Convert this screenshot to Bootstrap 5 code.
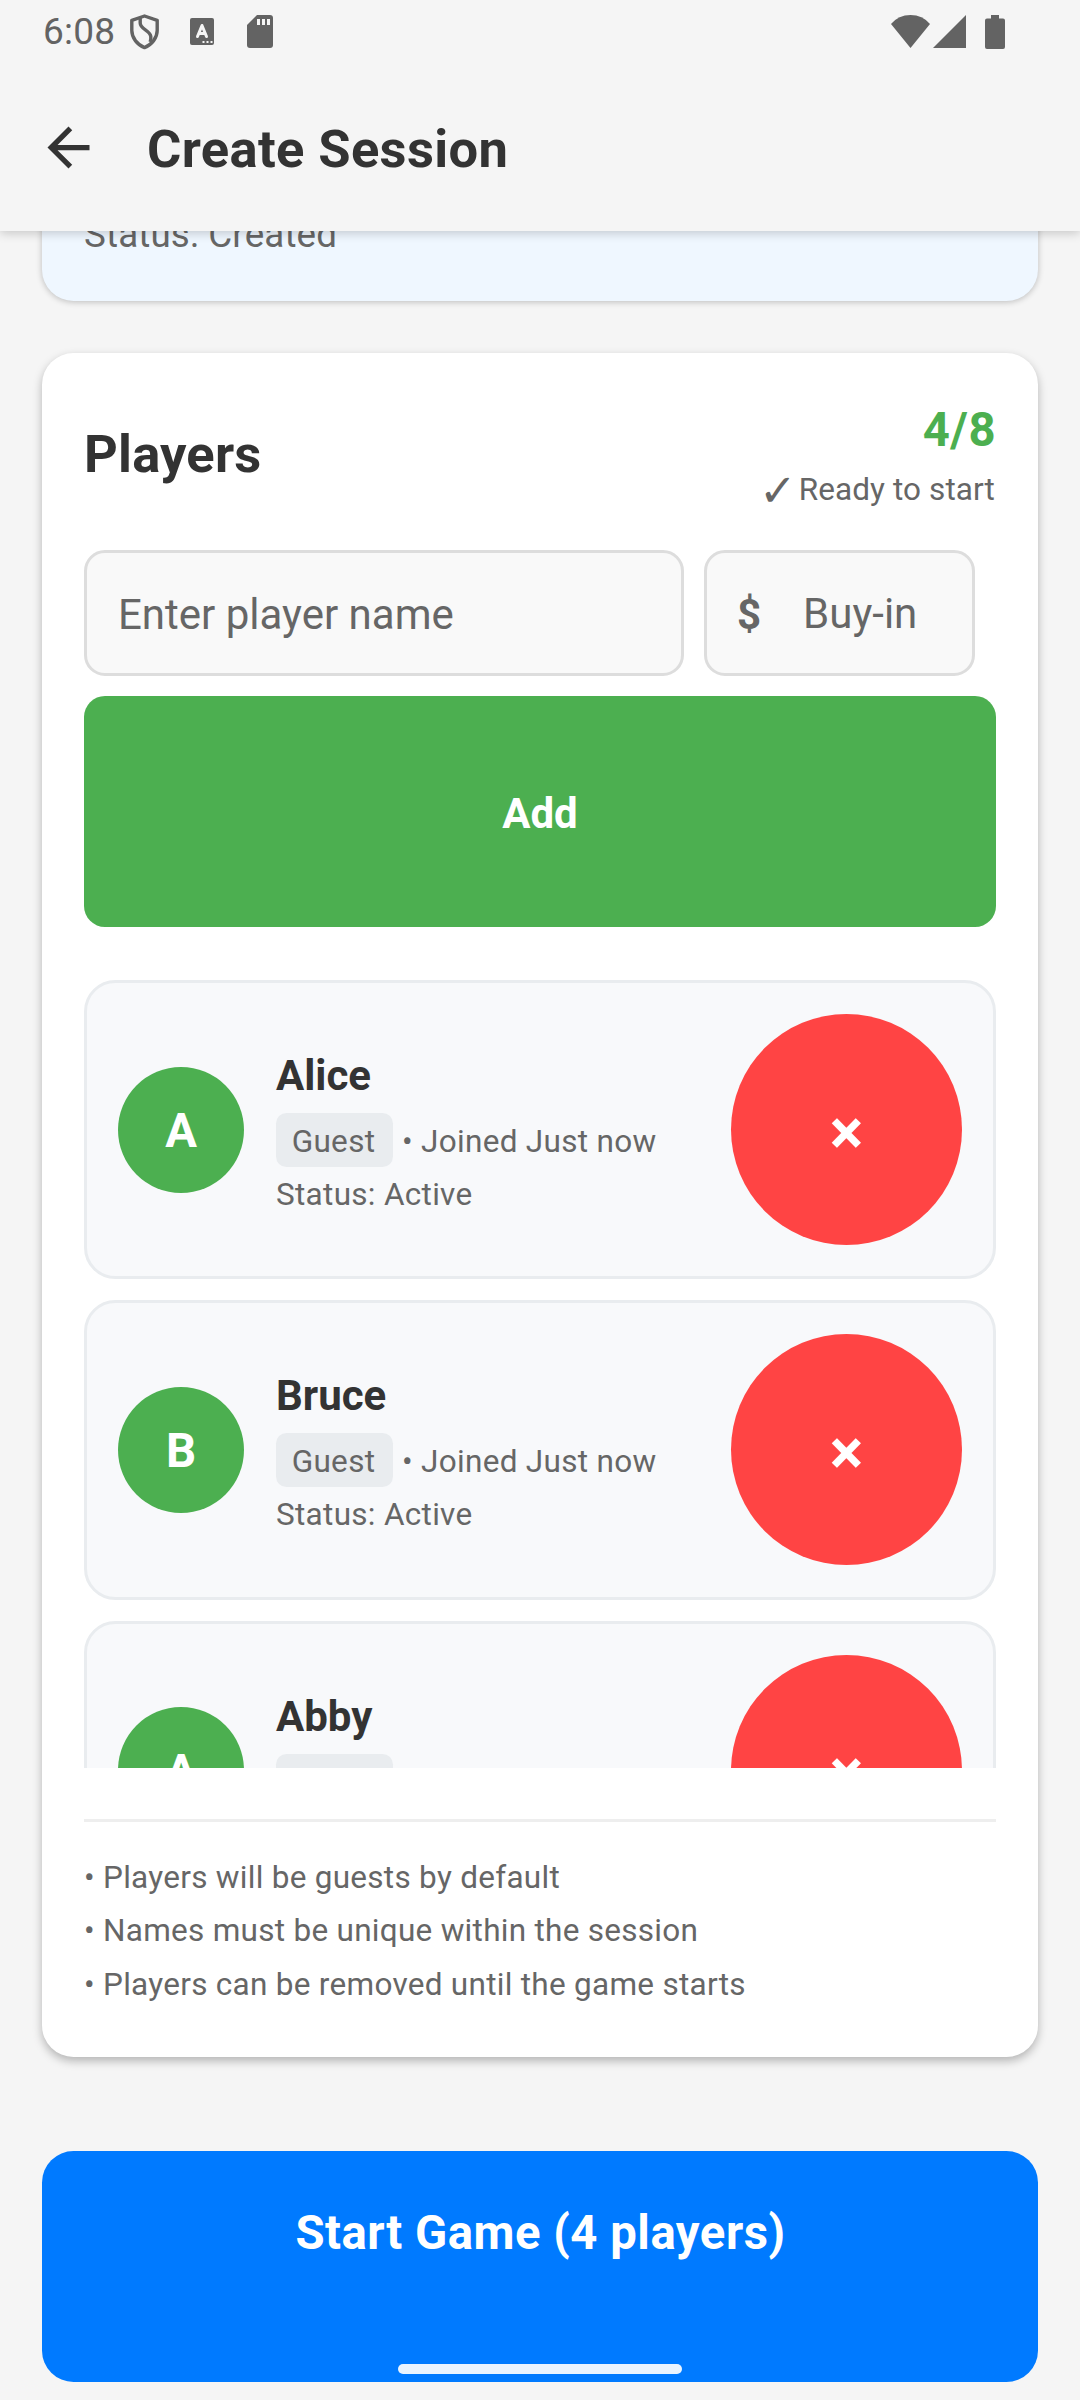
<!DOCTYPE html>
<html lang="en">
<head>
<meta charset="utf-8">
<meta name="viewport" content="width=device-width, initial-scale=1">
<title>Create Session</title>
<link href="https://cdn.jsdelivr.net/npm/bootstrap@5.3.0/dist/css/bootstrap.min.css" rel="stylesheet">
<style>
  body { font-family: Roboto, "DejaVu Sans", sans-serif; background: #f5f5f5; color: #333; }
  .screen { width: 1080px; height: 2400px; }
  svg { display: block; flex: none; }

  /* top bars */
  .topbars { z-index: 2; background: #f5f5f5; box-shadow: 0 2px 10px rgba(0,0,0,.2); height: 231px; }
  .sysbar { height: 63px; padding: 0 75px 0 43px; color: #636363; }
  .clock { font-size: 37px; line-height: 63px; width: 87px; letter-spacing: .2px; }
  .sysbar .ic-font { margin-left: 31px; }
  .sysbar .ic-sd { margin-left: 33px; }
  .sysbar .ic-sig { margin-left: 3px; }
  .sysbar .ic-bat { margin-left: 19px; }
  .appbar { height: 168px; padding-left: 37px; }
  .appbar h1 { font-size: 52.5px; line-height: 64px; letter-spacing: .36px; margin: 0 0 0 47px; padding-top: 3px; font-weight: 700; }

  .scroller { padding: 0 42px; }
  .panel { border: 0; border-radius: 31.5px; padding: 42px; }
  .panel-session { background: #eff7ff; margin-top: -60px; height: 130px; padding-top: 39px; box-shadow: 0 1px 6px rgba(0,0,0,.24); }
  .panel-session p { font-size: 36.75px; line-height: 50px; letter-spacing: .15px; color: #666; }
  .panel-players { margin-top: 52px; padding-bottom: 45px; box-shadow: 0 4px 10px rgba(0,0,0,.27); color: #333; }

  .head { height: 118px; margin-bottom: 37px; }
  .head h2 { font-size: 52.5px; line-height: 62px; font-weight: 700; letter-spacing: .2px; }
  .tally { font-size: 47.25px; line-height: 70px; font-weight: 700; color: #4caf50; letter-spacing: .5px; }
  .ready { font-size: 31.5px; line-height: 50px; margin-bottom: -2px; padding-right: 1px; color: #666; letter-spacing: .1px; }
  .tick { font-size: 45px; line-height: 0; vertical-align: -6px; margin-right: -6px; }

  .entry { gap: 20px; }
  .field { height: 126px; border: 3px solid #ddd; border-radius: 21px; background: #f9f9f9; }
  .field .form-control { height: 120px; border: 0; background: transparent; box-shadow: none; font-size: 42px; line-height: 50px; color: #333; }
  .field .form-control::placeholder { color: #666; opacity: 1; }
  .field-name { width: 600px; }
  .field-name .form-control { padding: 2px 31px 0; }
  .field-buyin { width: 271px; padding-left: 30px; }
  .field-buyin .form-control { padding: 1px 0 0 42px; }
  .currency { font-size: 42px; font-weight: 700; color: #666; padding-top: 2px; }
  .btn-add { height: 231px; margin-top: 20px; border: 0; border-radius: 21px; background: #4caf50; color: #fff; font-size: 42px; font-weight: 700; padding: 3px 0 0; }

  .roster { height: 788px; margin-top: 53px; gap: 21px; }
  .player { height: 299.25px; flex: none; border: 3px solid #e9ecef; border-radius: 31.5px; background: #f8f9fb; padding: 0 31px; }
  .avatar { width: 126px; height: 126px; background: #4caf50; color: #fff; font-size: 47.25px; font-weight: 700; padding-top: 4px; flex: none; }
  .info { margin-left: 32px; padding-top: 12px; color: #666; font-size: 31.5px; letter-spacing: .3px; }
  .info h3 { font-size: 42px; line-height: 50px; font-weight: 700; color: #333; letter-spacing: 0; margin-bottom: 12px; }
  .guest-tag { height: 54px; width: 117px; padding-right: 2px; border-radius: 10.5px; background: #e9ecef; line-height: 57px; }
  .joined { margin-left: 9px; line-height: 57px; height: 54px; }
  .state { line-height: 55px; margin-bottom: -2px; }
  .btn-remove { width: 231px; height: 231px; background: #f44; color: #fff; border: 0; font-size: 63px; line-height: 1; font-weight: 700; padding: 5px 0 0; flex: none; }

  .hints { margin-top: 51px; border-top: 3px solid #eee; padding-top: 28.5px; font-size: 31.5px; line-height: 53.7px; letter-spacing: .28px; color: #666; }
  .btn-start { height: 231px; margin-top: 94px; border: 0; border-radius: 31.5px; background: #007aff; color: #fff; font-size: 47.25px; line-height: 70px; font-weight: 700; letter-spacing: .52px; padding: 47px 0 0 1px; }
  .homebar { left: 398px; top: 2364px; width: 284px; height: 10px; border-radius: 5px; background: #eaf4ff; z-index: 3; }
</style>
</head>
<body>
<div class="screen position-relative overflow-hidden d-flex flex-column">

  <header class="topbars position-relative flex-shrink-0">
    <div class="sysbar d-flex align-items-center">
      <span class="clock">6:08</span>
      <svg width="29" height="36" viewBox="0 0 29 36" fill="none" stroke="#636363" stroke-width="3.4" stroke-linejoin="round"><path d="M14.5 2 27.2 6.3V16.500C27.200 24 21.500 31 14.500 33.600 7.500 31 1.800 24 1.800 16.500V6.300Z"/><path d="M10.200 3.500V9C10.200 15.500 20 16 20.800 22.500 21 24.500 20.800 26 20.200 28"/></svg>
      <svg class="ic-font" width="24" height="27" viewBox="0 0 24 27"><rect width="24" height="27" rx="2" fill="#636363"/><path d="M7.500 18.500 12 7.500 16.500 18.500M9.200 15.500H14.800" fill="none" stroke="#f5f5f5" stroke-width="3" stroke-linecap="round" stroke-linejoin="round"/><path d="M12.500 23h2v2h-2zM16.500 23h2v2h-2zM20.500 23h2v2h-2z" fill="#f5f5f5"/></svg>
      <svg class="ic-sd" width="26" height="33" viewBox="0 0 26 33"><path d="M10 0H23Q26 0 26 3V30Q26 33 23 33H3Q0 33 0 30V10Z" fill="#636363"/><path d="M10 4h3v6h-3zM15 4h3v6h-3zM20 4h3v6h-3z" fill="#f5f5f5"/></svg>
      <svg class="ms-auto" width="39" height="33" viewBox="0 0 39 33"><path d="M0 9Q7.500 0 19.500 0T39 9L19.500 33Z" fill="#636363"/></svg>
      <svg class="ic-sig" width="33" height="33" viewBox="0 0 33 33"><path d="M33 0V33H0Z" fill="#636363"/></svg>
      <svg class="ic-bat" width="20" height="34" viewBox="0 0 20 34"><path d="M6 0H14V3.500H18Q20 3.500 20 5.500V32Q20 34 18 34H2Q0 34 0 32V5.500Q0 3.500 2 3.500H6Z" fill="#636363"/></svg>
    </div>
    <div class="appbar d-flex align-items-center">
      <svg width="63" height="63" viewBox="0 0 24 24"><path fill="#333" d="M20 11H7.830l5.590-5.590L12 4l-8 8 8 8 1.410-1.410L7.830 13H20v-2z"/></svg>
      <h1>Create Session</h1>
    </div>
  </header>

  <main class="scroller flex-grow-1">
    <section class="card panel panel-session"><p class="m-0">Status: Created</p></section>

    <section class="card panel panel-players">
      <div class="head d-flex justify-content-between align-items-center">
        <h2 class="m-0">Players</h2>
        <div class="text-end">
          <div class="tally">4/8</div>
          <div class="ready"><span class="tick">✓</span> Ready to start</div>
        </div>
      </div>

      <div class="entry d-flex">
        <div class="field field-name"><input class="form-control" type="text" placeholder="Enter player name" aria-label="Player name"></div>
        <div class="field field-buyin d-flex align-items-center"><span class="currency">$</span><input class="form-control" type="text" placeholder="Buy-in" aria-label="Buy-in"></div>
      </div>
      <button class="btn btn-add w-100" type="button">Add</button>

      <div class="roster d-flex flex-column overflow-hidden">
        <div class="player d-flex align-items-center">
          <div class="avatar rounded-circle d-flex align-items-center justify-content-center">A</div>
          <div class="info flex-grow-1">
            <h3>Alice</h3>
            <div class="d-flex"><span class="guest-tag text-center">Guest</span><span class="joined">• Joined Just now</span></div>
            <div class="state">Status: Active</div>
          </div>
          <button class="btn btn-remove rounded-circle" type="button">×</button>
        </div>
        <div class="player d-flex align-items-center">
          <div class="avatar rounded-circle d-flex align-items-center justify-content-center">B</div>
          <div class="info flex-grow-1">
            <h3>Bruce</h3>
            <div class="d-flex"><span class="guest-tag text-center">Guest</span><span class="joined">• Joined Just now</span></div>
            <div class="state">Status: Active</div>
          </div>
          <button class="btn btn-remove rounded-circle" type="button">×</button>
        </div>
        <div class="player d-flex align-items-center">
          <div class="avatar rounded-circle d-flex align-items-center justify-content-center">A</div>
          <div class="info flex-grow-1">
            <h3>Abby</h3>
            <div class="d-flex"><span class="guest-tag"></span></div>
            <div class="state">&nbsp;</div>
          </div>
          <button class="btn btn-remove rounded-circle" type="button">×</button>
        </div>
      </div>

      <div class="hints">
        <div>• Players will be guests by default</div>
        <div>• Names must be unique within the session</div>
        <div>• Players can be removed until the game starts</div>
      </div>
    </section>

    <button class="btn btn-start w-100 d-flex justify-content-center align-items-start" type="button">Start Game (4 players)</button>
  </main>

  <div class="homebar position-absolute"></div>
</div>
<script src="https://cdn.jsdelivr.net/npm/bootstrap@5.3.0/dist/js/bootstrap.bundle.min.js"></script>
</body>
</html>
